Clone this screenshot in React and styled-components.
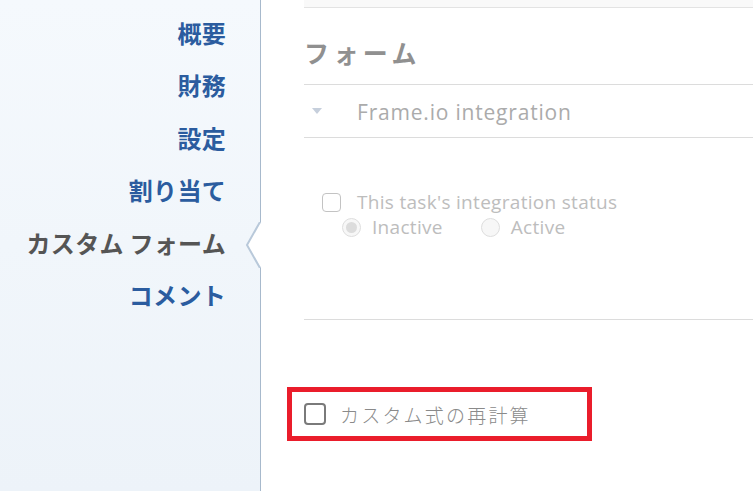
import React from 'react';
import styled, { createGlobalStyle } from 'styled-components';

const GlobalStyle = createGlobalStyle`
  html, body {
    margin: 0;
    padding: 0;
    background: #ffffff;
  }
  body {
    font-family: "Open Sans", "Noto Sans CJK JP", sans-serif;
    overflow: hidden;
  }
`;

const Page = styled.div`
  display: flex;
  width: 753px;
  height: 491px;
  overflow: hidden;
`;

const Sidebar = styled.nav`
  width: 261px;
  flex-shrink: 0;
  background: linear-gradient(180deg, #f5f9fd 0%, #edf3f9 100%);
  border-right: 1px solid #a7b9cc;
  padding-top: 15px;
  box-sizing: border-box;
  display: flex;
  flex-direction: column;
  align-items: flex-end;
  padding-right: 34px;
`;

const NavItem = styled.a`
  display: block;
  height: 52.4px;
  line-height: 36px;
  font-family: "Noto Sans CJK JP", sans-serif;
  font-size: 24px;
  font-weight: 700;
  letter-spacing: 0.3px;
  color: ${p => (p.$active ? '#555555' : '#2b5c9f')};
  text-decoration: none;
  position: relative;
  white-space: nowrap;
`;

const Notch = styled.svg`
  position: absolute;
  right: -35px;
  top: -3px;
  width: 16px;
  height: 46px;
`;

const Main = styled.main`
  flex: 1;
  padding-left: 43px;
  display: flex;
  flex-direction: column;
`;

const TopBand = styled.div`
  height: 7px;
  background: #f9f9f9;
  border-bottom: 1px solid #e3e3e3;
`;

const Heading = styled.h2`
  margin: 0;
  height: 77px;
  line-height: 88px;
  box-sizing: border-box;
  font-family: "Noto Sans CJK JP", sans-serif;
  font-size: 25px;
  font-weight: 700;
  letter-spacing: 4.4px;
  color: #909090;
  border-bottom: 1px solid #dcdcdc;
`;

const SectionRow = styled.div`
  height: 53px;
  display: flex;
  align-items: center;
  border-bottom: 1px solid #dcdcdc;
  box-sizing: border-box;
`;

const Caret = styled.span`
  width: 0;
  height: 0;
  border-left: 5px solid transparent;
  border-right: 5px solid transparent;
  border-top: 6px solid #c6cfdc;
  margin-left: 8px;
  margin-right: 35px;
`;

const SectionTitle = styled.span`
  font-size: 21px;
  letter-spacing: 0.8px;
  color: #ababab;
  padding-top: 2px;
`;

const FieldBlock = styled.div`
  height: 182px;
  box-sizing: border-box;
  padding: 53px 0 0 18px;
  border-bottom: 1px solid #dcdcdc;
`;

const CheckRow = styled.label`
  display: flex;
  align-items: center;
  gap: ${p => p.$gap || 16}px;
  font-size: 19px;
  letter-spacing: 0.3px;
  color: ${p => p.$color || '#bdbdbd'};
  height: 22px;
`;

const Box = styled.span`
  width: ${p => p.$size || 19}px;
  height: ${p => p.$size || 19}px;
  border: ${p => (p.$dark ? '2px solid #7a7a7a' : '1.5px solid #c3c3c3')};
  border-radius: 4px;
  box-sizing: border-box;
  flex-shrink: 0;
`;

const RadioRow = styled.div`
  display: flex;
  align-items: center;
  padding-left: 20px;
  margin-top: 3px;
  height: 22px;
`;

const RadioOption = styled.span`
  display: flex;
  align-items: center;
  gap: 11px;
  font-size: 19px;
  letter-spacing: 0.3px;
  color: #bdbdbd;
  margin-right: 38px;
`;

const Radio = styled.span`
  width: 19px;
  height: 19px;
  border-radius: 50%;
  border: 1px solid #dedede;
  background: #f7f7f7;
  box-sizing: border-box;
  display: flex;
  align-items: center;
  justify-content: center;

  &::after {
    content: '';
    display: ${p => (p.$checked ? 'block' : 'none')};
    width: 11px;
    height: 11px;
    border-radius: 50%;
    background: #dcdcdc;
  }
`;

const Highlight = styled.div`
  margin: 67px 0 0 -17px;
  width: 305px;
  height: 54px;
  border: 5px solid #ea1d2b;
  box-sizing: border-box;
  display: flex;
  align-items: center;
  padding-left: 12px;
`;

const RecalcText = styled.span`
  font-family: "Noto Sans CJK JP", sans-serif;
  font-size: 19px;
  font-weight: 300;
  color: #8a8a8a;
  letter-spacing: 2.2px;
`;

const navItems = ['概要', '財務', '設定', '割り当て', 'カスタム フォーム', 'コメント'];

export default function App() {
  return (
    <>
      <GlobalStyle />
      <Page>
        <Sidebar>
          {navItems.map(item => {
            const active = item === 'カスタム フォーム';
            return (
              <NavItem key={item} $active={active}>
                {item}
                {active && (
                  <Notch viewBox="0 0 16 46">
                    <path d="M16 0 L2 23 L16 46 Z" fill="#ffffff" />
                    <path d="M15 0 L2 23 L15 46" fill="none" stroke="#b9c9da" strokeWidth="2" />
                  </Notch>
                )}
              </NavItem>
            );
          })}
        </Sidebar>
        <Main>
          <TopBand />
          <Heading>フォーム</Heading>
          <SectionRow>
            <Caret />
            <SectionTitle>Frame.io integration</SectionTitle>
          </SectionRow>
          <FieldBlock>
            <CheckRow>
              <Box />
              This task's integration status
            </CheckRow>
            <RadioRow>
              <RadioOption>
                <Radio $checked />
                Inactive
              </RadioOption>
              <RadioOption>
                <Radio />
                Active
              </RadioOption>
            </RadioRow>
          </FieldBlock>
          <Highlight>
            <CheckRow $gap={14} $color="#8a8a8a">
              <Box $size={22} $dark />
              <RecalcText>カスタム式の再計算</RecalcText>
            </CheckRow>
          </Highlight>
        </Main>
      </Page>
    </>
  );
}
